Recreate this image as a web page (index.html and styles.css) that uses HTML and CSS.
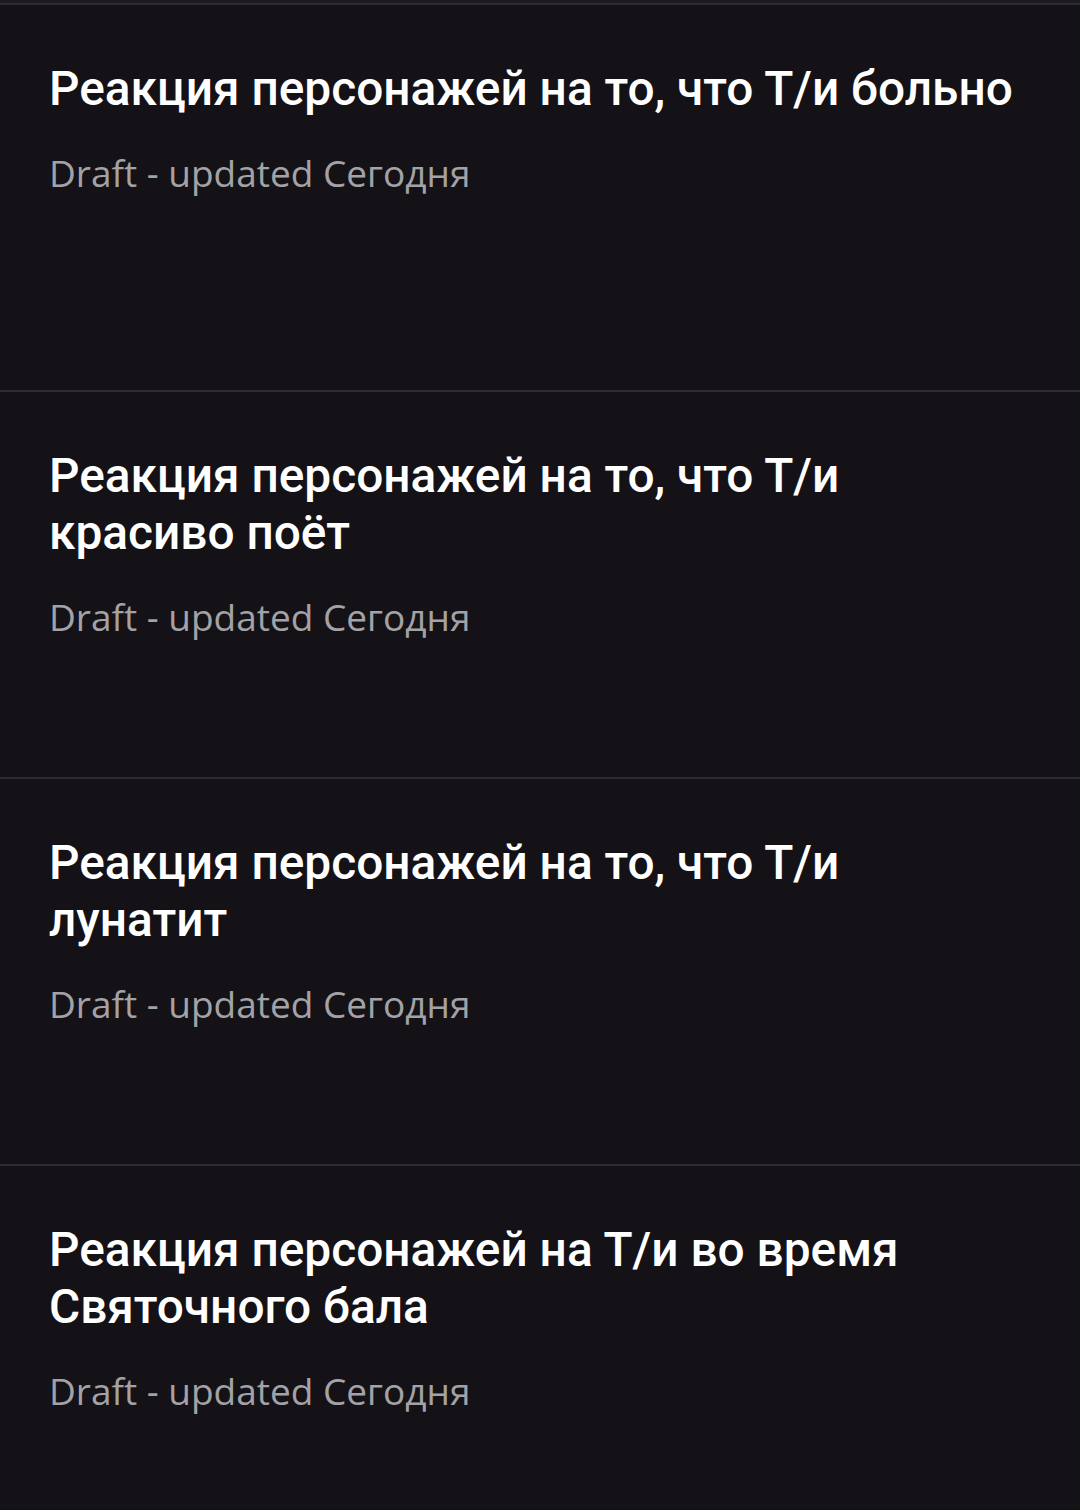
FILE: index.html
```html
<!DOCTYPE html>
<html lang="ru">
<head>
<meta charset="utf-8">
<title>Drafts</title>
<link rel="stylesheet" href="styles.css">
</head>
<body>
<div class="top-strip"></div>
<ul class="draft-list">
  <li class="draft">
    <h2 class="draft-title">Реакция персонажей на то, что Т/и больно</h2>
    <p class="draft-meta">Draft - updated Сегодня</p>
  </li>
  <li class="draft">
    <h2 class="draft-title">Реакция персонажей на то, что Т/и красиво поёт</h2>
    <p class="draft-meta">Draft - updated Сегодня</p>
  </li>
  <li class="draft">
    <h2 class="draft-title">Реакция персонажей на то, что Т/и лунатит</h2>
    <p class="draft-meta">Draft - updated Сегодня</p>
  </li>
  <li class="draft">
    <h2 class="draft-title">Реакция персонажей на Т/и во время Святочного бала</h2>
    <p class="draft-meta">Draft - updated Сегодня</p>
  </li>
</ul>
</body>
</html>
```
FILE: styles.css
```css
html, body {
  margin: 0;
  padding: 0;
  background: #141216;
}
body {
  width: 1080px;
  height: 1510px;
  overflow: hidden;
}
.top-strip {
  height: 3px;
  background: #1c1b1f;
}
.draft-list {
  list-style: none;
  margin: 0;
  padding: 0;
}
.draft {
  box-sizing: border-box;
  height: 387px;
  border-top: 2px solid #2d2c30;
  padding: 56px 0 0 49px;
}
.draft-title {
  margin: 0;
  font-family: Roboto, "Noto Sans", sans-serif;
  font-weight: 500;
  font-size: 47.8px;
  line-height: 57px;
  color: #ffffff;
  max-width: 972px;
}
.draft-meta {
  margin: 30px 0 0;
  font-family: "Open Sans", "Noto Sans", sans-serif;
  font-weight: 400;
  font-size: 37px;
  line-height: 50px;
  color: #a3a2a6;
}
```
